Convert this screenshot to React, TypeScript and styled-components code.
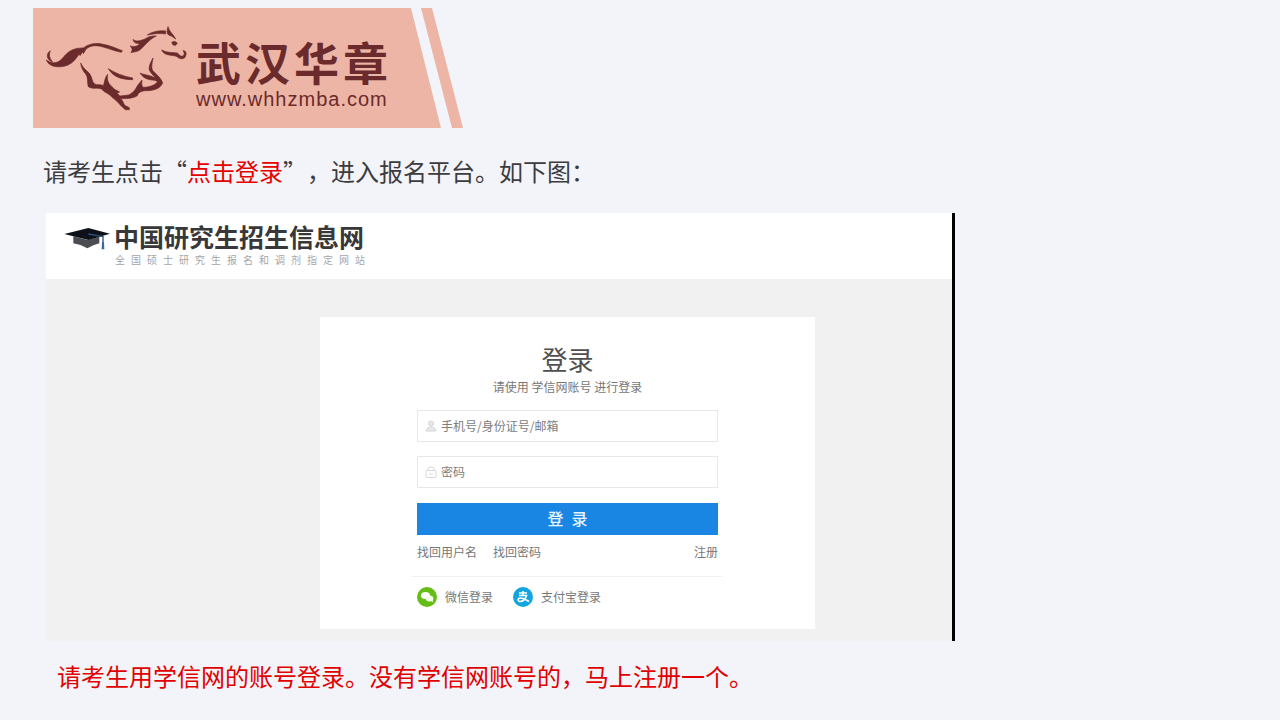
import React from "react";
import styled, { createGlobalStyle } from "styled-components";

const GlobalStyle = createGlobalStyle`
  *, *::before, *::after { box-sizing: border-box; }
  body {
    margin: 0;
    background: #f2f4f9;
    color: #3c3c3e;
    font-family: "Noto Sans CJK SC", sans-serif;
    text-spacing-trim: space-all;
  }
`;

const Page = styled.main`
  padding: 8px 32px 24px 33px;
`;

const Banner = styled.header`
  display: flex;
  height: 120px;
`;

const BannerBody = styled.div`
  display: flex;
  gap: 9px;
  width: 408px;
  padding: 16px 0 0 13px;
  background: #edb5a6;
  color: #6b2a2b;
  clip-path: polygon(0 0, 378px 0, 100% 100%, 0 100%);
`;

const BannerStripe = styled.div`
  width: 42px;
  margin-left: -20px;
  background: #edb5a6;
  clip-path: polygon(0 0, 11px 0, 100% 100%, 31px 100%);
`;

const BrandText = styled.div`
  display: flex;
  flex-direction: column;
  gap: 6px;
  padding-top: 16px;
`;

const BrandName = styled.div`
  font-size: 45px;
  font-weight: 700;
  letter-spacing: 4px;
  line-height: 44px;
`;

const BrandUrl = styled.a`
  color: inherit;
  font-family: "Liberation Sans", sans-serif;
  font-size: 20px;
  letter-spacing: 1px;
  line-height: 18px;
  text-decoration: none;
`;

const Note = styled.p<{ $alert?: boolean }>`
  margin: 0;
  padding: ${(p) => (p.$alert ? "17px 0 0 24px" : "25px 0 24px 10px")};
  color: ${(p) => (p.$alert ? "#e00000" : "inherit")};
  font-size: 24px;
  line-height: 36px;
`;

const Highlight = styled.span`
  color: #e60000;
`;

const Portal = styled.section`
  max-width: 909px;
  margin-left: 13px;
  padding-bottom: 12px;
  border-right: 3px solid #000;
  background: #f1f1f1;
`;

const PortalHeader = styled.div`
  display: flex;
  gap: 4px;
  height: 66px;
  padding: 11px 18px 0;
  background: #fff;
  svg { margin-top: 3px; }
`;

const PortalName = styled.div`
  color: #38383a;
  font-size: 25px;
  font-weight: 700;
  line-height: 24px;
`;

const PortalTagline = styled.div`
  padding: 3px 0 0 1px;
  color: #a6a6a6;
  font-size: 10px;
  letter-spacing: 6px;
  line-height: 18px;
`;

const Card = styled.form`
  display: flex;
  flex-direction: column;
  max-width: 495px;
  margin: 38px 0 0 274px;
  padding: 26px 97px 22px;
  background: #fff;
  color: #777;
  font-size: 12px;
  line-height: 18px;
`;

const Title = styled.h1`
  margin: 0 0 3px;
  color: #505050;
  font-size: 26px;
  font-weight: 400;
  line-height: 32px;
  text-align: center;
`;

const Subtitle = styled.p`
  margin: 0 0 14px;
  text-align: center;
`;

const Field = styled.label`
  display: flex;
  align-items: center;
  gap: 4px;
  height: 32px;
  margin-bottom: 14px;
  padding: 0 7px;
  border: 1px solid #e8e8e8;
`;

const Input = styled.input`
  flex: 1;
  min-width: 0;
  padding: 0;
  border: 0;
  outline: 0;
  background: none;
  color: #777;
  font: inherit;
  &::placeholder { color: #7d7d7d; opacity: 1; }
`;

const Submit = styled.button`
  height: 32px;
  margin-top: 1px;
  padding: 0 0 2px;
  border: 0;
  background: #1886e2;
  color: #e8f5ff;
  font-family: inherit;
  font-size: 16px;
  font-weight: 500;
  line-height: 24px;
`;

const Links = styled.nav`
  display: flex;
  gap: 16px;
  padding: 8px 0 15px;
`;

const TextLink = styled.a<{ $end?: boolean }>`
  display: flex;
  align-items: center;
  gap: 8px;
  margin-left: ${(p) => (p.$end ? "auto" : "0")};
  color: inherit;
  text-decoration: none;
`;

const Providers = styled.div`
  display: flex;
  gap: 20px;
  margin: 0 -5px;
  padding: 10px 5px 0;
  border-top: 1px solid #f1f1f1;
`;

const Horse = () => (
  <svg width="141" height="87" viewBox="48 72 423 261" fill="currentColor" stroke="currentColor" strokeWidth="2" strokeLinejoin="round" role="img" aria-label="奔马">
    <path d="M61 152C48 160 48 180 68 185C58 176 56 164 61 152Z" />
    <path d="M49 180C70 194 86 190 100 172C115 152 135 143 160 144C175 132 195 128 215 132C240 136 260 146 277 152L274 157C250 152 235 145 212 139C192 135 178 138 168 148L160 161L158 155L150 167L148 161C138 176 130 188 112 196C90 204 58 203 49 180Z" />
    <path d="M309 118C315 126 330 123 345 117C355 110 365 107 379 108C362 115 350 130 335 145C325 156 315 155 303 158C306 152 310 147 300 138C315 142 325 138 330 130C320 132 310 128 309 118Z" />
    <path d="M352 105C370 93 390 91 407 93V102C390 99 370 101 352 105Z" />
    <path d="M414 80C410 92 410 100 416 105C424 107 430 112 437 117C432 104 419 98 414 80Z" />
    <path d="M425 127L434 124L442 129L437 136L429 135Z" />
    <path d="M395 150C408 158 425 157 442 159C450 167 455 171 459 168C464 163 464 158 459 152C470 151 470 163 465 172C459 179 448 177 439 169C425 164 402 168 395 150Z" />
    <path d="M369 174C357 195 355 208 360 214C368 226 378 232 382 246C375 256 355 262 340 262C334 258 335 248 336 240C328 250 322 256 318 265C312 275 305 280 296 285L270 288L272 295C290 297 312 294 322 287C325 277 335 272 350 272C370 272 392 266 398 248C392 232 377 222 367 210C363 200 367 188 369 174Z" />
    <path d="M330 219C342 225 362 225 382 237C384 243 380 244 374 241C358 239 342 238 330 219Z" />
    <path d="M235 206C255 219 280 229 308 234V239C280 239 250 233 235 206Z" />
    <path d="M152 189C158 203 168 210 178 220C188 234 185 244 193 251C200 257 211 251 220 257C224 248 223 234 233 223C230 240 235 251 246 260C256 268 250 275 262 282L276 300L284 316L298 323V329H286C273 320 262 302 246 292C236 278 224 280 215 267C200 261 190 269 175 260C171 245 175 232 167 222C158 212 153 200 152 189Z" />
    <path d="M250 266L269 276L261 279L273 292L260 287Z" />
  </svg>
);

const Cap = () => (
  <svg width="46" height="24" viewBox="70 66 138 72" role="img" aria-label="学士帽">
    <path d="M98 94L140 105L176 95V115Q158 119 140 130Q120 118 98 115Z" fill="#4b4d52" />
    <path d="M71 87L143 69L208 86L143 105Z" fill="#0d1119" />
    <path d="M143 87L187 95V130" fill="none" stroke="#2d5276" strokeWidth="4" />
    <path d="M184 112H190L191 133H183Z" fill="#3c668d" />
  </svg>
);

const UserIcon = () => (
  <svg width="12" height="12" viewBox="0 0 12 12" fill="#e8e8e8" stroke="#d6d6d6" aria-hidden="true">
    <circle cx="6" cy="3.5" r="2.5" />
    <path d="M1 11C1 8 4 7 6 7S11 8 11 11Z" />
  </svg>
);

const LockIcon = () => (
  <svg width="12" height="12" viewBox="0 0 12 12" fill="none" stroke="#d8d8d8" aria-hidden="true">
    <path d="M3 5V3Q3 1 6 1T9 3V5" />
    <rect x="1" y="4.5" width="10" height="7" rx="1" />
    <path d="M4 8H8" />
  </svg>
);

const WechatIcon = () => (
  <svg width="20" height="20" viewBox="0 0 20 20" aria-hidden="true">
    <circle cx="10" cy="10" r="10" fill="#66bd16" />
    <ellipse cx="8.5" cy="8.5" rx="4.5" ry="3.5" fill="#fff" />
    <ellipse cx="12.5" cy="11.5" rx="3.8" ry="3" fill="#f4ffe9" />
    <path d="M13 13L16 15.5L15.5 12.5Z" fill="#f4ffe9" />
  </svg>
);

const AlipayIcon = () => (
  <svg width="20" height="20" viewBox="0 0 20 20" aria-hidden="true">
    <circle cx="10" cy="10" r="10" fill="#12a5df" />
    <path
      d="M6 6H14M10 4V8.5M6 8.5H13.5C12.5 11.5 10 14.5 7 14.5C4.500 14.500 4.500 11 7.500 11C10.500 11 13 13 16 14.500"
      fill="none"
      stroke="#fff"
      strokeWidth="1.6"
    />
  </svg>
);

export default function App() {
  return (
    <>
      <GlobalStyle />
      <Page>
        <Banner>
          <BannerBody>
            <Horse />
            <BrandText>
              <BrandName>武汉华章</BrandName>
              <BrandUrl href="#home">www.whhzmba.com</BrandUrl>
            </BrandText>
          </BannerBody>
          <BannerStripe />
        </Banner>

        <Note>
          请考生点击“<Highlight>点击登录</Highlight>”，进入报名平台。如下图：
        </Note>

        <Portal>
          <PortalHeader>
            <Cap />
            <div>
              <PortalName>中国研究生招生信息网</PortalName>
              <PortalTagline>全国硕士研究生报名和调剂指定网站</PortalTagline>
            </div>
          </PortalHeader>
          <Card>
            <Title>登录</Title>
            <Subtitle>请使用 学信网账号 进行登录</Subtitle>
            <Field>
              <UserIcon />
              <Input type="text" aria-label="手机号/身份证号/邮箱" placeholder="手机号/身份证号/邮箱" />
            </Field>
            <Field>
              <LockIcon />
              <Input type="password" aria-label="密码" placeholder="密码" />
            </Field>
            <Submit type="button">登&ensp;录</Submit>
            <Links>
              <TextLink href="#username">找回用户名</TextLink>
              <TextLink href="#password">找回密码</TextLink>
              <TextLink href="#register" $end>注册</TextLink>
            </Links>
            <Providers>
              <TextLink href="#wechat"><WechatIcon />微信登录</TextLink>
              <TextLink href="#alipay"><AlipayIcon />支付宝登录</TextLink>
            </Providers>
          </Card>
        </Portal>

        <Note $alert>请考生用学信网的账号登录。没有学信网账号的，马上注册一个。</Note>
      </Page>
    </>
  );
}
